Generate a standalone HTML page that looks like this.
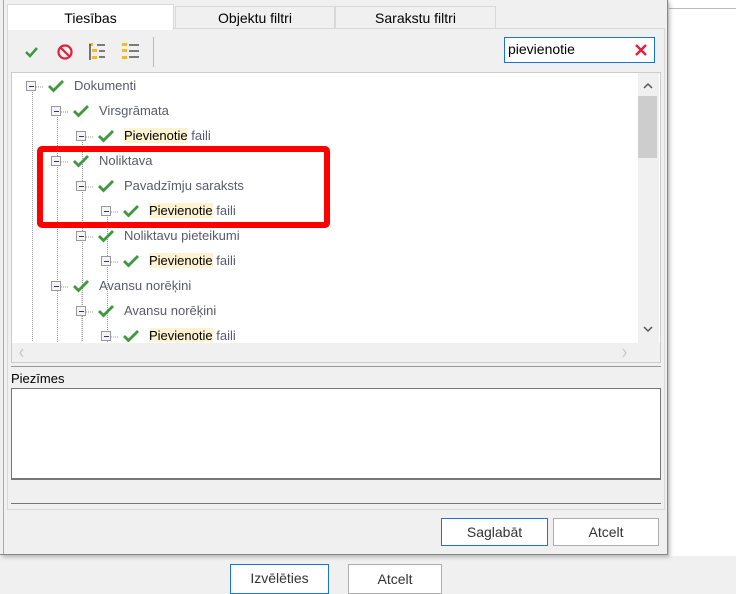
<!DOCTYPE html>
<html><head><meta charset="utf-8"><style>
*{box-sizing:border-box;margin:0;padding:0}
html,body{width:736px;height:589px}
body{background:#f0f0f0;position:relative;overflow:hidden;font-family:"Liberation Sans",sans-serif;font-size:13px;color:#000}
.abs{position:absolute}
.dlg{left:0;top:0;width:668px;height:555px;background:#f0f0f0;border-right:1px solid #888;border-bottom:1px solid #888;box-shadow:2px 2px 4px rgba(0,0,0,.25)}
.right{left:669px;top:0;width:67px;height:556px;background:#fff}
.tab{top:6px;height:23px;border:1px solid #d9d9d9;border-bottom:none;background:#f0f0f0;text-align:center;line-height:22px;font-size:14px}
.btn{border:1px solid #adadad;background:#fff;text-align:center;font-size:14px;color:#333}
.row{position:absolute;height:20px;line-height:20px;font-size:13px;color:#5a5a6e;white-space:nowrap}
.box{position:absolute;width:10px;height:10px;border:1px solid #999;background:#f4f4f4;top:5px}
.box:after{content:"";position:absolute;left:2px;top:3.5px;width:5px;height:1px;background:#336}
.hl{background:#fdf3d0;color:#000}
.ck{position:absolute;top:2px}
</style></head><body>
<div class="abs right"></div>
<div class="abs" style="left:669px;top:8px;width:67px;height:1px;background:#bbb"></div>
<div class="abs dlg"></div>
<div class="abs" style="left:3px;top:0;width:1px;height:554px;background:#aaa"></div>
<div class="abs tab" style="left:175px;width:160px">Objektu filtri</div>
<div class="abs tab" style="left:335px;width:161px">Sarakstu filtri</div>
<div class="abs" style="left:7px;top:28px;width:658px;height:482px;border:1px solid #d9d9d9;background:#f0f0f0"></div>
<div class="abs tab" style="left:7px;top:4px;width:167px;height:26px;background:#fff;line-height:26px">Tiesības</div>
<svg class="abs" style="left:11px;top:32px" width="160" height="40">
<path d="M15 20l4 4 7-8" stroke="#3c9a3c" stroke-width="2.5" fill="none"/>
<circle cx="54" cy="20" r="6.5" stroke="#e0203c" stroke-width="2.2" fill="none"/><path d="M49.5 15.5l9 9" stroke="#e0203c" stroke-width="2.2"/>
<g><rect x="78" y="11" width="4" height="3" fill="#f2b92d"/><rect x="81" y="17" width="5" height="3" fill="#f2b92d"/><rect x="81" y="24" width="5" height="3" fill="#f2b92d"/><path d="M79 12v16M86 13h8M88 19h6M88 25h6" stroke="#333" stroke-width="1.3"/></g>
<g><rect x="111" y="11" width="5" height="3" fill="#f2b92d"/><rect x="111" y="17" width="5" height="3" fill="#f2b92d"/><rect x="111" y="24" width="5" height="3" fill="#f2b92d"/><path d="M118 13h10M118 19h10M118 25h10" stroke="#333" stroke-width="1.3"/></g>
<path d="M142.5 5v30" stroke="#bbb"/>
</svg>
<div class="abs" style="left:504px;top:37px;width:151px;height:26px;border:1px solid #1a74d2;background:#fff;font-size:14px;line-height:23px;padding-left:3px">pievienotie</div>
<svg class="abs" style="left:634px;top:43px" width="14" height="14"><path d="M2 2l10 10M12 2L2 12" stroke="#e0203c" stroke-width="2.4"/></svg>
<div class="abs" style="left:11px;top:72px;width:650px;height:291px;border:1px solid #ccc;background:#fff;overflow:hidden">
<div class="abs" style="left:626px;top:0;width:21px;height:270px;background:#f0f0f0"></div>
<div class="abs" style="left:626px;top:23px;width:19px;height:62px;background:#cdcdcd"></div>
<svg class="abs" style="left:626px;top:0" width="20" height="270"><path d="M6 15l4-4 4 4M6 254l4 4 4-4" stroke="#555" stroke-width="1.5" fill="none"/></svg>
<div class="abs" style="left:0;top:270px;width:648px;height:20px;background:#f0f0f0"></div>
<svg class="abs" style="left:0;top:270px" width="626" height="20"><path d="M11 6l-3 4 3 4M611 6l3 4-3 4" stroke="#c4c4c4" stroke-width="1.2" fill="none"/></svg>
<svg class="abs" style="left:0;top:0" width="626" height="270">
<g stroke="#999" stroke-dasharray="1 1" fill="none">
<path d="M20.5 19v250M45.5 44v250M70.5 69v200M95.5 144v130M20 14h12M45 39h12M70 64h12M45 89h12M70 114h12M95 139h12M70 164h12M95 189h12M45 214h12M70 239h12M95 264h12M70 219v50"/>
</g>
</svg>
</div>
<div id="tree"></div>
<div class="abs" style="left:37px;top:146px;width:293px;height:82px;border:6px solid #ff0000;border-radius:5px"></div>
<div class="abs" style="left:11px;top:366px;width:650px;height:1px;background:#999"></div>
<div class="abs" style="left:11px;top:371px;font-size:13px">Piezīmes</div>
<div class="abs" style="left:11px;top:388px;width:650px;height:92px;border:1px solid #777;border-bottom:2px solid #777;background:#fff"></div>
<div class="abs" style="left:11px;top:503px;width:650px;height:1px;background:#777"></div>
<div class="abs btn" style="left:441px;top:518px;width:107px;height:28px;line-height:26px;border-color:#1a74d2">Saglabāt</div>
<div class="abs btn" style="left:553px;top:518px;width:106px;height:28px;line-height:26px">Atcelt</div>
<div class="abs btn" style="left:230px;top:564px;width:99px;height:30px;line-height:26px;border-color:#1a74d2">Izvēlēties</div>
<div class="abs btn" style="left:348px;top:564px;width:94px;height:30px;line-height:28px">Atcelt</div>
<script>
var rows=[[0,86,'Dokumenti'],[1,111,'Virsgrāmata'],[2,136,'*'],[1,161,'Noliktava'],[2,186,'Pavadzīmju saraksts'],[3,211,'*'],[2,236,'Noliktavu pieteikumi'],[3,261,'*'],[1,286,'Avansu norēķini'],[2,311,'Avansu norēķini'],[3,336,'*']];
var h='';rows.forEach(function(r){var x=26+25*r[0];var t=r[2]=='*'?'<span class="hl">Pievienotie</span> faili':r[2];
h+='<div class="row" style="left:'+x+'px;top:'+(r[1]-10)+'px;width:300px"><div class="box" style="left:0"></div><svg class="ck" style="left:21px" width="18" height="16"><path d="M2 8l4.5 4.5L16 3" stroke="#3c9a3c" stroke-width="2.8" fill="none"/></svg><span style="position:absolute;left:48px">'+t+'</span></div>';});
var d=document.getElementById('tree');d.innerHTML=h;d.style.cssText='position:absolute;left:0;top:0;width:636px;height:342px;overflow:hidden';
</script>
</body></html>
